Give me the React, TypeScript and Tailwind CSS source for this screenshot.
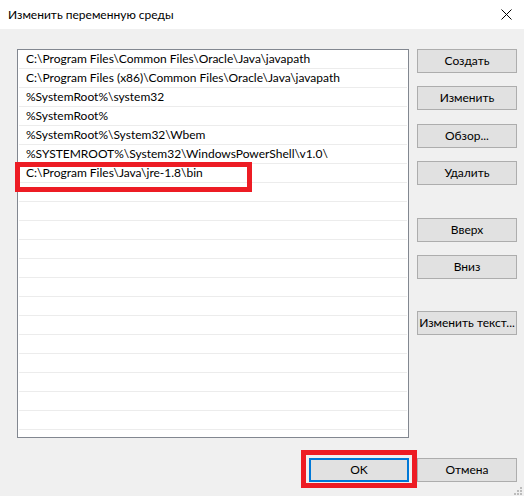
import React from "react";

const paths = [
  "C:\\Program Files\\Common Files\\Oracle\\Java\\javapath",
  "C:\\Program Files (x86)\\Common Files\\Oracle\\Java\\javapath",
  "%SystemRoot%\\system32",
  "%SystemRoot%",
  "%SystemRoot%\\System32\\Wbem",
  "%SYSTEMROOT%\\System32\\WindowsPowerShell\\v1.0\\",
  "C:\\Program Files\\Java\\jre-1.8\\bin",
];

const TOTAL_ROWS = 20;
const HIGHLIGHT_ROW = 6;

// side buttons with the top margin each one sits at
const sideButtons = [
  { label: "Создать", mt: "mt-0" },
  { label: "Изменить", mt: "mt-[13px]" },
  { label: "Обзор...", mt: "mt-[14px]" },
  { label: "Удалить", mt: "mt-[13px]" },
  { label: "Вверх", mt: "mt-[33px]" },
  { label: "Вниз", mt: "mt-[13px]" },
  { label: "Изменить текст...", mt: "mt-[32px]" },
];

const CloseIcon = () => (
  <svg width="11" height="11" viewBox="0 0 11 11" className="block">
    <path d="M0.5 0.5 L10.5 10.5 M10.5 0.5 L0.5 10.5" stroke="#000" strokeWidth="1" />
  </svg>
);

const SizeGrip = () => (
  <svg width="11" height="9" viewBox="0 0 11 9" className="block">
    <rect x="8" y="0" width="2" height="2" fill="#bcbcbc" />
    <rect x="5" y="3" width="2" height="2" fill="#bcbcbc" />
    <rect x="8" y="3" width="2" height="2" fill="#bcbcbc" />
    <rect x="2" y="6" width="2" height="2" fill="#bcbcbc" />
    <rect x="5" y="6" width="2" height="2" fill="#bcbcbc" />
    <rect x="8" y="6" width="2" height="2" fill="#bcbcbc" />
  </svg>
);

export default function App() {
  const rows = Array.from({ length: TOTAL_ROWS }, (_, i) => paths[i] ?? "");

  return (
    <div className="w-[524px] h-[496px] bg-[#f0f0f0] flex flex-col text-[12px] text-black font-['Lato','Liberation_Sans',sans-serif] overflow-hidden">
      {/* Title bar */}
      <div className="h-[29px] bg-white flex items-center justify-between pl-[8px] pr-[12px]">
        <span className="text-[12px] leading-none">Изменить переменную среды</span>
        <CloseIcon />
      </div>

      {/* Body */}
      <div className="flex pt-[20px] pl-[17px]">
        {/* Path list */}
        <div className="w-[392px] h-[389px] border border-[#828790] bg-white px-px">
          {rows.map((text, i) => (
            <div
              key={i}
              className="relative h-[19px] border-b border-[#ececec] pl-[7px] flex items-center whitespace-nowrap leading-none"
            >
              {text}
              {i === HIGHLIGHT_ROW && (
                <div className="absolute left-[-4px] top-[-2px] w-[237px] h-[30px] border-[5px] border-[#ed1c24] pointer-events-none" />
              )}
            </div>
          ))}
        </div>

        {/* Action buttons */}
        <div className="ml-[8px] w-[100px] flex flex-col">
          {sideButtons.map((b) => (
            <button
              key={b.label}
              className={`${b.mt} h-[24px] w-[100px] bg-[#e1e1e1] border border-[#adadad] flex items-center justify-center whitespace-nowrap leading-none`}
            >
              {b.label}
            </button>
          ))}
        </div>
      </div>

      {/* Dialog buttons */}
      <div className="flex justify-end gap-[8px] pr-[7px] mt-[20px]">
        <div className="relative">
          <button className="h-[24px] w-[100px] bg-[#e1e1e1] border-2 border-[#0078d7] flex items-center justify-center leading-none">
            OK
          </button>
          <div className="absolute left-[-8px] top-[-8px] w-[116px] h-[38px] border-[5px] border-[#ed1c24] pointer-events-none" />
        </div>
        <button className="h-[24px] w-[100px] bg-[#e1e1e1] border border-[#adadad] flex items-center justify-center leading-none">
          Отмена
        </button>
      </div>

      <div className="flex justify-end pr-[1px] mt-[5px]">
        <SizeGrip />
      </div>
    </div>
  );
}
